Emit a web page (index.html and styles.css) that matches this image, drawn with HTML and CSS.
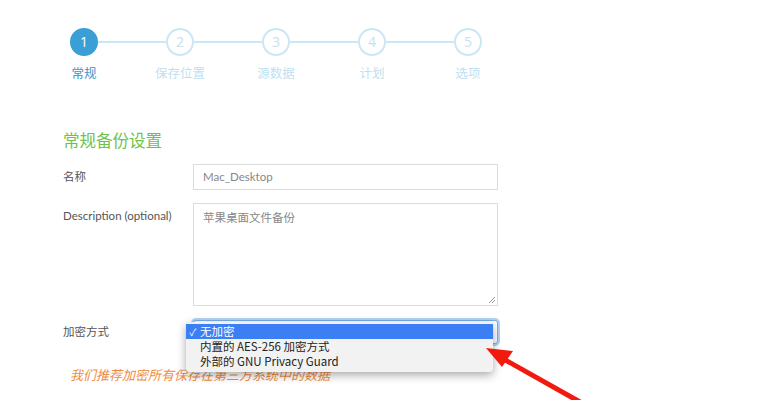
FILE: index.html
```html
<!DOCTYPE html>
<html lang="zh-CN">
<head>
  <meta charset="UTF-8" />
  <title>备份设置</title>
  <link rel="stylesheet" href="styles.css">
</head>
<body>
  <div class="page">
    <!-- Stepper -->
    <div class="stepper">
      <div class="dots">
        <span class="dot active">1</span><span class="bar"></span>
        <span class="dot">2</span><span class="bar"></span>
        <span class="dot">3</span><span class="bar"></span>
        <span class="dot">4</span><span class="bar"></span>
        <span class="dot">5</span>
      </div>
      <div class="labels">
        <span class="lbl active">常规</span>
        <span class="lbl">保存位置</span>
        <span class="lbl">源数据</span>
        <span class="lbl">计划</span>
        <span class="lbl">选项</span>
      </div>
    </div>

    <!-- Form -->
    <div class="form">
      <h2 class="title">常规备份设置</h2>

      <div class="row">
        <label class="label">名称</label>
        <div class="field input">Mac_Desktop</div>
      </div>

      <div class="row ta-row">
        <label class="label">Description (optional)</label>
        <div class="field textarea">苹果桌面文件备份
          <svg class="grip" width="8" height="8" viewBox="0 0 8 8"><path d="M7 1L1 7M7 4L4 7" stroke="#999" stroke-width="1"/></svg>
        </div>
      </div>

      <div class="row sel-row">
        <label class="label">加密方式</label>
        <div class="select-wrap">
          <div class="field select"></div>
          <div class="menu">
            <div class="opt on"><span class="chk">✓</span>无加密</div>
            <div class="opt"><span class="chk"></span>内置的 AES-256 加密方式</div>
            <div class="opt"><span class="chk"></span>外部的 GNU Privacy Guard</div>
          </div>
        </div>
      </div>

      <p class="hint">我们推荐加密所有保存在第三方系统中的数据</p>
    </div>
  </div>

  <!-- red annotation arrow -->
  <svg class="arrow" width="768" height="400" viewBox="0 0 768 400">
    <line x1="580" y1="402" x2="500" y2="357" stroke="#f21a0f" stroke-width="5"/>
    <polygon points="486,348 513,351 502,367" fill="#f21a0f"/>
  </svg>
</body>
</html>
```

FILE: styles.css
```css
*{margin:0;padding:0;box-sizing:border-box;}
html,body{width:768px;height:400px;background:#fff;overflow:hidden;
  font-family:"Open Sans","Noto Sans CJK SC",sans-serif;color:#555;}

.page{padding:28px 0 0 0;}

/* stepper */
.stepper{display:flex;flex-direction:column;gap:9px;}
.dots{display:flex;align-items:center;margin-left:70px;}
.dot{width:28px;height:28px;border-radius:50%;
  border:2px solid #cbe6f4;color:#c4e1f1;
  display:flex;align-items:center;justify-content:center;
  font-size:14px;line-height:1;}
.dot.active{background:#3a9fd4;border-color:#3a9fd4;color:#fff;}
.bar{width:68px;height:2px;background:#cbe6f4;}
.labels{display:flex;margin-left:36px;}
.lbl{width:96px;text-align:center;font-size:12.5px;color:#bfdff0;line-height:18px;}
.lbl.active{color:#3a95c8;}

/* form */
.form{padding:46px 0 0 63px;}
.title{font-weight:normal;font-size:16.5px;color:#6ec34c;line-height:24px;margin-bottom:11px;}
.row{display:flex;align-items:flex-start;margin-bottom:13px;}
.ta-row{margin-bottom:14px;}
.label{width:130px;font-family:Lato,"Noto Sans CJK SC",sans-serif;font-size:11.5px;color:#555;line-height:26px;}
.field{width:305px;border:1px solid #dcdcdc;background:#fff;
  font-family:Lato,"Noto Sans CJK SC",sans-serif;
  font-size:11.5px;color:#888;padding:0 9px;}
.input{height:26px;line-height:24px;}
.textarea{height:103px;line-height:24px;padding-top:2px;position:relative;}
.grip{position:absolute;right:1px;bottom:1px;}

.sel-row{margin-bottom:22px;}
.sel-row .label{line-height:24px;}
.select-wrap{position:relative;}
.select{height:24px;border:1px solid #7aaee8;box-shadow:0 0 0 2px #b4d2f5;border-radius:3px;}

.menu{position:absolute;left:-7px;top:2px;width:307px;
  background:#f2f2f2;border-radius:4px;padding:2px 0 3px;
  box-shadow:0 3px 10px rgba(0,0,0,.35);
  font-family:"Noto Sans CJK SC","Noto Sans",sans-serif;
  font-size:11.5px;color:#222;}
.opt{display:flex;align-items:center;height:15px;line-height:15px;}
.opt.on{background:#3c7ef4;color:#fff;}
.chk{width:14px;text-align:center;font-size:10px;}

.hint{font-style:italic;color:#f08c3e;font-size:13px;margin:0 0 0 7px;line-height:18px;
  font-family:"Noto Sans CJK SC",sans-serif;}

.arrow{position:absolute;left:0;top:0;pointer-events:none;}
```
